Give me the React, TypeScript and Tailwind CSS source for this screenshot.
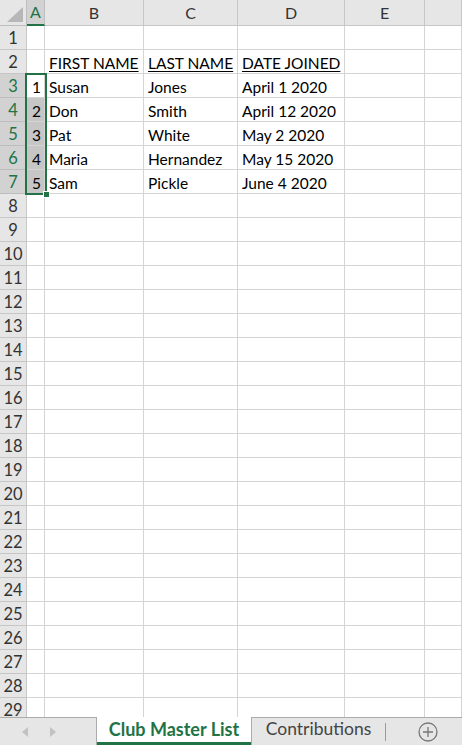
import React from 'react';

const cols = ['A', 'B', 'C', 'D', 'E', ''];

const people = [
  { n: '1', first: 'Susan', last: 'Jones', date: 'April 1 2020' },
  { n: '2', first: 'Don', last: 'Smith', date: 'April 12 2020' },
  { n: '3', first: 'Pat', last: 'White', date: 'May 2 2020' },
  { n: '4', first: 'Maria', last: 'Hernandez', date: 'May 15 2020' },
  { n: '5', first: 'Sam', last: 'Pickle', date: 'June 4 2020' },
];

const gridCols = 'grid grid-cols-[27px_18px_99px_94px_107px_80px_1fr]';

function Cell({ children, className = '' }: { children?: React.ReactNode; className?: string }) {
  return (
    <div className={`h-[24px] border-r border-b border-[#d4d4d4] flex items-end pb-0 pl-[4px] pr-[3px] leading-[20px] overflow-visible whitespace-nowrap ${className}`}>
      {children}
    </div>
  );
}

export default function App() {
  const rows = Array.from({ length: 29 }, (_, i) => i + 1);

  return (
    <div className="w-[462px] h-[745px] bg-white overflow-hidden text-[15.5px] text-black" style={{ fontFamily: 'Lato, "Liberation Sans", sans-serif' }}>
      {/* Sheet */}
      <div className="relative h-[717px] overflow-hidden">
        {/* Column headers */}
        <div className={`${gridCols} h-[26px]`}>
          <div className="relative bg-[#e6e6e6] border-r border-b border-[#bdbdbd]">
            <svg className="absolute right-[3px] bottom-[3px]" width="16" height="15" viewBox="0 0 16 15">
              <polygon points="16,0 16,15 0,15" fill="#b7b7b7" />
            </svg>
          </div>
          {cols.map((c, i) => (
            <div
              key={i}
              className={
                i === 0
                  ? 'bg-[#d2d2d2] border-r border-[#bdbdbd] border-b-2 border-b-[#217346] flex items-center justify-center text-[#217346] text-[16px]'
                  : 'bg-[#e6e6e6] border-r border-b border-[#c6c6c6] flex items-center justify-center text-[#333] text-[16px]'
              }
            >
              {c}
            </div>
          ))}
        </div>

        {/* Rows */}
        {rows.map((r) => {
          const sel = r >= 3 && r <= 7;
          const p = sel ? people[r - 3] : null;
          return (
            <div key={r} className={gridCols}>
              <div
                className={`h-[24px] border-r border-b flex items-center justify-center pt-[1px] text-[16.5px] ${
                  sel ? 'bg-[#d2d2d2] text-[#217346] border-[#bdbdbd]' : 'bg-[#e6e6e6] text-[#333] border-[#c6c6c6]'
                }`}
              >
                {r}
              </div>
              <Cell className={`justify-end ${sel && r > 3 ? 'bg-[#c6c6c6]' : ''}`}>{p?.n}</Cell>
              <Cell>{r === 2 ? <span className="underline underline-offset-2">FIRST NAME</span> : p?.first}</Cell>
              <Cell>{r === 2 ? <span className="underline underline-offset-2">LAST NAME</span> : p?.last}</Cell>
              <Cell>{r === 2 ? <span className="underline underline-offset-2">DATE JOINED</span> : p?.date}</Cell>
              <Cell />
              <Cell />
            </div>
          );
        })}

        {/* Selection A3:A7 */}
        <div className="absolute left-[25px] top-[73px] w-[22px] h-[122px] border-2 border-[#217346] pointer-events-none" />
        <div className="absolute left-[43px] top-[191px] w-[7px] h-[7px] bg-[#217346] border border-white" />
      </div>

      {/* Sheet tabs */}
      <div className="h-[28px] flex bg-[#e6e6e6]">
        <div className="w-[97px] border-t border-[#ababab] border-r flex items-center gap-[22px] pl-[22px]">
          <svg width="6" height="10" viewBox="0 0 6 10">
            <polygon points="6,0 6,10 0,5" fill="#c2c2c2" />
          </svg>
          <svg width="6" height="10" viewBox="0 0 6 10">
            <polygon points="0,0 0,10 6,5" fill="#c2c2c2" />
          </svg>
        </div>
        <div className="w-[154px] bg-white border-b-[3px] border-[#217346] flex items-center justify-center pb-[1px] font-bold text-[#217346] text-[18px]">
          Club Master List
        </div>
        <div className="flex-1 border-t border-l border-[#ababab] flex items-center">
          <div className="w-[133px] flex items-center justify-center text-[#444] text-[17.5px] pb-[5px]">Contributions</div>
          <div className="w-px h-[18px] bg-[#9a9a9a]" />
          <div className="flex-1 flex items-center justify-center pl-[8px]">
            <svg width="20" height="20" viewBox="0 0 20 20" fill="none" stroke="#777" strokeWidth="1.3">
              <circle cx="10" cy="10" r="9" />
              <path d="M10 5v10M5 10h10" />
            </svg>
          </div>
        </div>
      </div>
    </div>
  );
}
